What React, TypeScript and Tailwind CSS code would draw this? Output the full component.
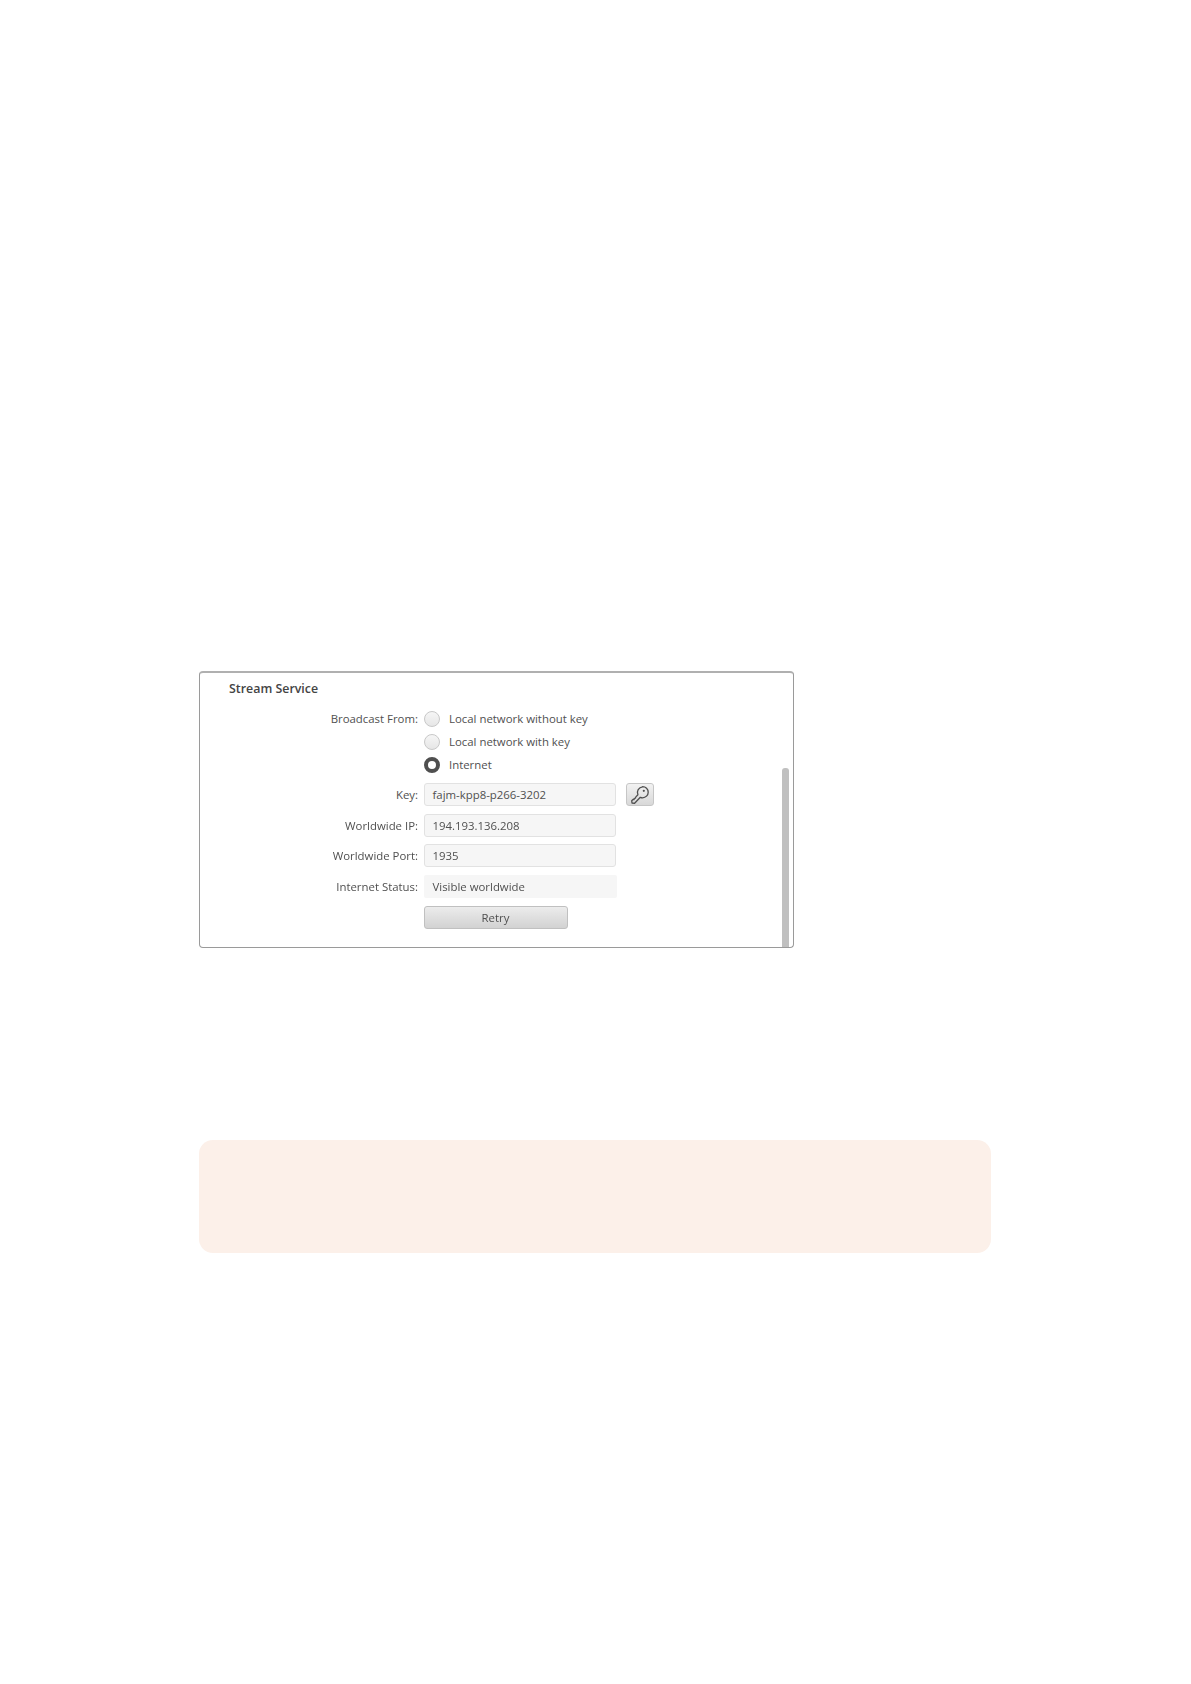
const font = { fontFamily: '"Open Sans", "Noto Sans", sans-serif' };

function Radio({ label, checked }: { label: string; checked?: boolean }) {
  return (
    <div className="flex h-[23px] items-center">
      {checked ? (
        <span className="h-[16px] w-[16px] rounded-full border-[4px] border-[#4f4f4f] bg-white" />
      ) : (
        <span className="h-[16px] w-[16px] rounded-full border border-[#c8c8c8] bg-gradient-to-b from-[#f6f6f6] to-[#e6e6e6]" />
      )}
      <span className="ml-[9px] text-[11.4px] text-[#505050]">{label}</span>
    </div>
  );
}

function Field({ label, value, plain }: { label: string; value: string; plain?: boolean }) {
  return (
    <div className="flex h-[23px] items-center">
      <span className="w-[218px] shrink-0 text-right text-[11.4px] text-[#505050]">{label}</span>
      <span
        className={
          plain
            ? 'ml-[5.5px] flex h-[23px] w-[193px] items-center rounded-[2px] bg-[#f6f6f6] pl-[9px] text-[11.4px] text-[#505050]'
            : 'ml-[5.5px] flex h-[23px] w-[192px] items-center rounded-[3px] border border-[#e2e2e2] bg-[#f6f6f6] pl-[8px] text-[11.4px] text-[#505050]'
        }
      >
        {value}
      </span>
    </div>
  );
}

export default function App() {
  return (
    <div className="min-h-[1684px] bg-white pl-[199px] pt-[671px]" style={font}>
      <div className="relative h-[277px] w-[595px] rounded-[4px] border border-t-2 border-[#9a9a9a] border-t-[#b0b0b0] bg-white blur-[0.45px]">
        <div className="pl-[29px] pt-[5.5px] text-[12.4px] leading-[20px] font-semibold text-[#444444]">Stream Service</div>

        <div className="mt-[8.5px] flex">
          <span className="flex h-[23px] w-[218px] items-center justify-end text-[11.4px] text-[#505050]">Broadcast From:</span>
          <div className="ml-[6px] flex flex-col">
            <Radio label="Local network without key" />
            <Radio label="Local network with key" />
            <Radio label="Internet" checked />
          </div>
        </div>

        <div className="mt-[7px] flex flex-col gap-[7.7px]">
          <div className="flex items-center">
            <Field label="Key:" value="fajm-kpp8-p266-3202" />
            <button
              type="button"
              className="ml-[10px] flex h-[23px] w-[28px] items-center justify-center rounded-[3px] border border-[#c6c6c6] bg-gradient-to-b from-[#f2f2f2] to-[#d8d8d8]"
            >
              <svg viewBox="0 0 20 20" className="h-[20px] w-[20px]" fill="none" stroke="#4f4f4f" strokeWidth="1.3" strokeLinejoin="round">
                <path d="M12.6 1.6a5.6 5.6 0 0 1 0 11.2c-.9 0-1.6-.2-2.3-.5l-5.7 6-2.6-.3-.3-2.3 1.3-1.2 1 .2.3-1.3 1.2-.2.2-1.1 2.2-2.3a5.6 5.6 0 0 1 4.7-7.9z" />
                <circle cx="13.8" cy="5.8" r="1.1" fill="#4f4f4f" stroke="none" />
              </svg>
            </button>
          </div>
          <Field label="Worldwide IP:" value="194.193.136.208" />
          <Field label="Worldwide Port:" value="1935" />
          <Field label="Internet Status:" value="Visible worldwide" plain />
        </div>

        <button
          type="button"
          className="mt-[8px] ml-[223.5px] flex h-[23px] w-[144px] items-center justify-center rounded-[3px] border border-[#c0c0c0] bg-gradient-to-b from-[#ececec] to-[#d2d2d2] text-[11.4px] text-[#505050]"
        >
          Retry
        </button>

        <div className="absolute right-[4px] bottom-0 h-[179px] w-[7px] rounded-t-[3px] bg-[#c0c0c0]" />
      </div>

      <div className="mt-[192px] h-[113px] w-[792px] rounded-[14px] bg-[#fcf0e9] blur-[0.6px]" />
    </div>
  );
}
